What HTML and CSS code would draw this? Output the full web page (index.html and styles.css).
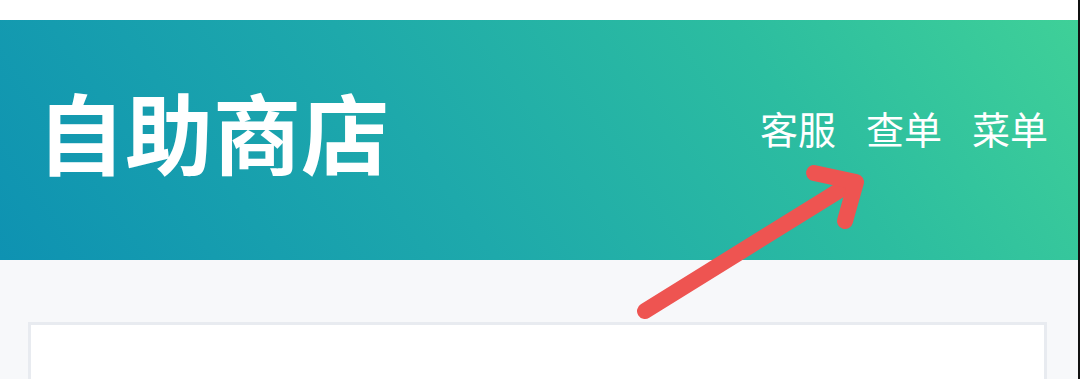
FILE: index.html
```html
<!DOCTYPE html>
<html lang="zh-CN">
<head>
<meta charset="utf-8">
<title>自助商店</title>
<link rel="stylesheet" href="styles.css">
</head>
<body>
<div class="page">
  <div class="topbar"></div>
  <header class="header">
    <h1 class="title">自助商店</h1>
    <nav class="nav">
      <a class="nav-item">客服</a>
      <a class="nav-item">查单</a>
      <a class="nav-item">菜单</a>
    </nav>
  </header>
  <main class="content">
    <section class="card"></section>
  </main>
  <svg class="arrow" width="1080" height="379" viewBox="0 0 1080 379">
    <g stroke="#ee5451" stroke-width="16" stroke-linecap="round" stroke-linejoin="round" fill="none">
      <line x1="645" y1="311" x2="853" y2="182"/>
      <polyline points="814,173 856,182 845,221"/>
    </g>
  </svg>
</div>
</body>
</html>
```
FILE: styles.css
```css
html, body {
  margin: 0;
  padding: 0;
}
body {
  background: #f7f8fa;
  font-family: "Noto Sans CJK SC", "Noto Sans", sans-serif;
  overflow: hidden;
}
.page {
  position: relative;
  width: 1078px;
  height: 379px;
  overflow: hidden;
  border-right: 2px solid #111;
  background: #f7f8fa;
}
.topbar {
  height: 20px;
  background: #ffffff;
}
.header {
  height: 240px;
  box-sizing: border-box;
  padding: 0 30px 0 37px;
  display: flex;
  align-items: center;
  justify-content: space-between;
  background: linear-gradient(55deg, #0e92b2 0%, #1ea9ab 40%, #2cbda0 72%, #3fd098 100%);
}
.title {
  margin: 0 0 20px 0;
  font-size: 88px;
  line-height: 1;
  font-weight: 700;
  color: #ffffff;
  letter-spacing: 0;
}
.nav {
  display: flex;
  gap: 30px;
  margin-bottom: 24px;
}
.nav-item {
  font-size: 38px;
  line-height: 1;
  color: #ffffff;
  text-decoration: none;
}
.content {
  padding: 62px 31px 0 28px;
}
.card {
  height: 54px;
  background: #ffffff;
  border: 3px solid #e8ebf0;
  border-bottom: none;
}
.arrow {
  position: absolute;
  left: 0;
  top: 0;
  pointer-events: none;
}
```
